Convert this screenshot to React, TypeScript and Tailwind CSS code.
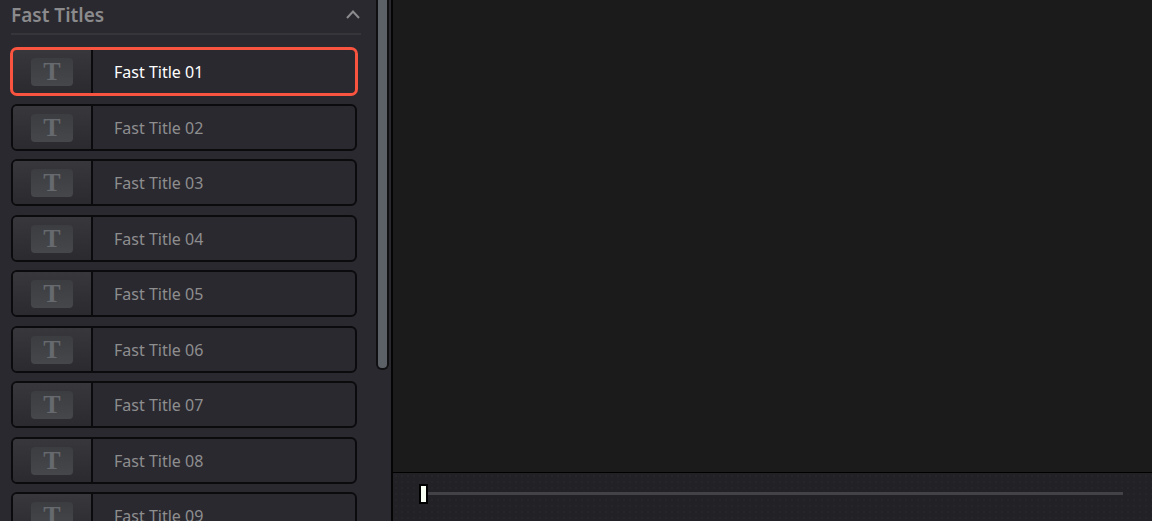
import { useState } from "react";

const TITLES = [
  "Fast Title 01",
  "Fast Title 02",
  "Fast Title 03",
  "Fast Title 04",
  "Fast Title 05",
  "Fast Title 06",
  "Fast Title 07",
  "Fast Title 08",
  "Fast Title 09",
];

function TitleRow({ name, selected, onSelect }: { name: string; selected: boolean; onSelect: () => void }) {
  return (
    <button
      type="button"
      aria-pressed={selected}
      onClick={onSelect}
      className={
        "flex h-[47px] w-full overflow-hidden rounded-md border-2 border-[#0b0b0d] text-left text-base " +
        (selected
          ? "text-white outline-3 -outline-offset-2 outline-[#f9543f]"
          : "text-[#8e8e8f]")
      }
    >
      <span className="flex h-full w-20 shrink-0 items-center justify-center border-r-2 border-[#0b0b0d] bg-linear-to-b from-[#38383c] to-[#2b2b2f]">
        <span
          aria-hidden="true"
          className="flex h-7 w-[42px] items-center justify-center rounded-sm bg-linear-to-b from-[#3c3d41] to-[#45474b] font-['Liberation_Serif',serif] text-[26px] leading-7 font-bold text-[#66696e]"
        >
          T
        </span>
      </span>
      <span className="flex h-full items-center pl-[21px]">{name}</span>
    </button>
  );
}

export default function App() {
  const [selected, setSelected] = useState(0);
  const [open, setOpen] = useState(true);
  const [frame, setFrame] = useState(0);

  return (
    <div className="flex h-screen overflow-hidden bg-[#2a292f] font-['Noto_Sans',sans-serif]">
      <aside className="flex w-[393px] shrink-0 border-r-2 border-[#050506]">
        <div className="min-w-0 flex-1 pl-[11px]">
          <h2 className="mr-[15px] border-b-2 border-[#35353a]">
            <button
              type="button"
              aria-expanded={open}
              onClick={() => setOpen(!open)}
              className="flex h-[33px] w-full items-start justify-between text-[19px] leading-[30px] font-semibold text-[#8b8b8d]"
            >
              Fast Titles
              <svg viewBox="0 0 16 12" className="mt-2 h-3 w-4" fill="none" stroke="#8b8b8d" strokeWidth="2" aria-hidden="true">
                <path d="M2 10 8 3.500l6 6.500" />
              </svg>
            </button>
          </h2>
          {open && (
            <ul className="mt-[13px] mr-[19px]">
              {TITLES.map((name, i) => (
                <li key={name} className="odd:h-14 even:h-[55px]">
                  <TitleRow name={name} selected={i === selected} onSelect={() => setSelected(i)} />
                </li>
              ))}
            </ul>
          )}
        </div>
        <div className="h-full w-[15px]">
          <div className="h-[71%] w-[13px] rounded-b-md border-2 border-t-0 border-[#101012] bg-[#5c6067]" />
        </div>
      </aside>
      <main className="flex min-w-0 flex-1 flex-col">
        <section aria-label="Viewer" className="flex-1 bg-[#1b1b1b]" />
        <footer className="flex h-[49px] items-start border-t border-black bg-[#222226] bg-[radial-gradient(#26262a_1px,transparent_1px)] bg-size-[6px_6px] pt-[10px] pr-[29px] pl-[26px]">
          <input
            type="range"
            aria-label="Playhead"
            min={0}
            max={100}
            value={frame}
            onChange={(e) => setFrame(Number(e.target.value))}
            className="h-5 w-full appearance-none bg-transparent [&::-webkit-slider-runnable-track]:h-[3px] [&::-webkit-slider-runnable-track]:bg-[#434347] [&::-webkit-slider-thumb]:-mt-2 [&::-webkit-slider-thumb]:h-5 [&::-webkit-slider-thumb]:w-[9px] [&::-webkit-slider-thumb]:appearance-none [&::-webkit-slider-thumb]:border-2 [&::-webkit-slider-thumb]:border-solid [&::-webkit-slider-thumb]:border-black [&::-webkit-slider-thumb]:bg-[#f8fff3]"
          />
        </footer>
      </main>
    </div>
  );
}
